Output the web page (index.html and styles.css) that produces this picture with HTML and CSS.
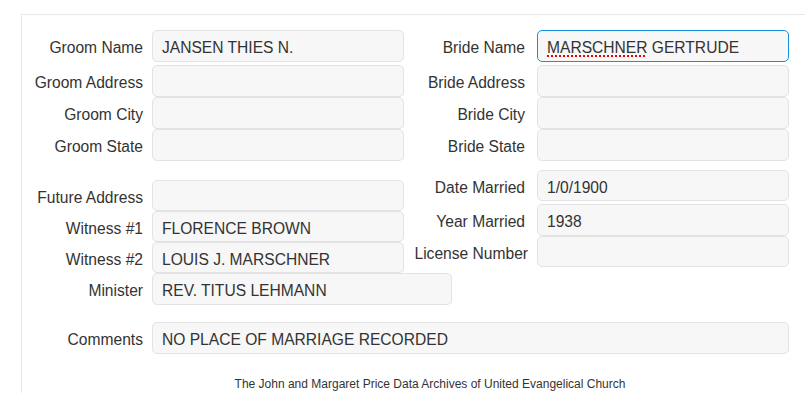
FILE: index.html
```html
<!DOCTYPE html>
<html lang="en">
<head>
  <meta charset="UTF-8">
  <meta name="viewport" content="width=device-width, initial-scale=1.0">
  <title>Marriage Record</title>
  <link rel="stylesheet" href="styles.css">
</head>
<body>
  <div class="record">
    <div class="columns">
      <div class="col col-left">
        <div class="row first"><label>Groom Name</label><div class="field"><span>JANSEN THIES N.</span></div></div>
        <div class="row"><label>Groom Address</label><div class="field"></div></div>
        <div class="row"><label>Groom City</label><div class="field"></div></div>
        <div class="row"><label>Groom State</label><div class="field"></div></div>
      </div>
      <div class="col col-right">
        <div class="row first"><label>Bride Name</label><div class="field focused"><span><span class="misspelled">MARSCHNER</span> GERTRUDE</span></div></div>
        <div class="row"><label>Bride Address</label><div class="field"></div></div>
        <div class="row"><label>Bride City</label><div class="field"></div></div>
        <div class="row"><label>Bride State</label><div class="field"></div></div>
      </div>
    </div>

    <div class="columns second">
      <div class="col col-left lower">
        <div class="row short"><label>Future Address</label><div class="field"></div></div>
        <div class="row short"><label>Witness #1</label><div class="field"><span>FLORENCE BROWN</span></div></div>
        <div class="row short"><label>Witness #2</label><div class="field"><span>LOUIS J. MARSCHNER</span></div></div>
        <div class="row"><label>Minister</label><div class="field wide"><span>REV. TITUS LEHMANN</span></div></div>
      </div>
      <div class="col col-right">
        <div class="row short first"><label>Date Married</label><div class="field"><span>1/0/1900</span></div></div>
        <div class="row"><label>Year Married</label><div class="field"><span>1938</span></div></div>
        <div class="row short"><label class="long">License Number</label><div class="field"></div></div>
      </div>
    </div>

    <div class="row comments"><label>Comments</label><div class="field full"><span>NO PLACE OF MARRIAGE RECORDED</span></div></div>

    <p class="footer">The John and Margaret Price Data Archives of United Evangelical Church</p>
  </div>
</body>
</html>
```

FILE: styles.css
```css
html, body {
  overflow: hidden;
}

body {
  font-family: "Liberation Sans", Arial, sans-serif;
  margin: 0;
  color: #333;
  background-color: #fff;
}

.record {
  margin: 14px 0 0 21px;
  width: 816px;
  padding-top: 15px;
  border-top: 1px solid #e8e8e8;
  border-left: 1px solid #e8e8e8;
}

.columns {
  display: flex;
}

.second {
  margin-top: 9px;
}

.col-left {
  width: 382px;
}

.col-left.lower {
  padding-top: 10px;
}

.row {
  display: flex;
  align-items: center;
  height: 32px;
}

.row.short {
  height: 31px;
}

.row.first {
  margin-bottom: 3px;
}

label {
  flex: none;
  box-sizing: content-box;
  padding-top: 4px;
  font-size: 15.6px;
  text-align: right;
  white-space: nowrap;
}

.col-left label,
.comments label {
  width: 121px;
  padding-right: 9px;
}

.col-right label {
  width: 121px;
  padding-right: 12px;
}

.col-right label.long {
  width: 124px;
  padding-right: 9px;
}

.field {
  flex: none;
  box-sizing: border-box;
  width: 252px;
  height: 100%;
  padding: 4px 9px 0;
  display: flex;
  align-items: center;
  background-color: #f7f7f7;
  border: 1px solid #e3e3e3;
  border-radius: 5px;
  font-size: 15.6px;
  color: #333;
  white-space: nowrap;
}

.field.wide {
  width: 300px;
}

.field.full {
  width: 637px;
}

.field.focused {
  border-color: #1790dc;
}

.misspelled {
  text-decoration: underline dotted #e00;
  text-decoration-thickness: 2px;
  text-underline-offset: 2px;
}

.comments {
  margin-top: 17px;
}

.footer {
  margin: 0;
  padding-top: 22px;
  text-align: center;
  font-size: 12px;
  line-height: 17px;
}
```
